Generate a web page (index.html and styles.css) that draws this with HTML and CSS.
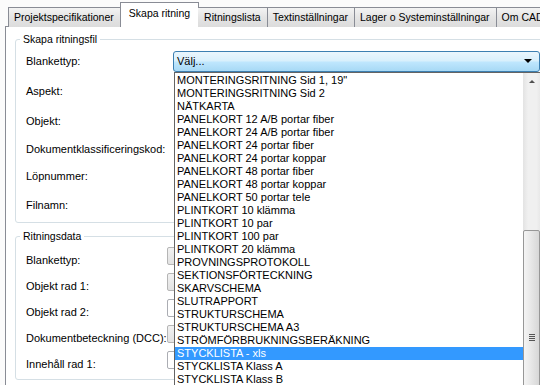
FILE: index.html
```html
<!DOCTYPE html>
<html lang="sv">
<head>
  <meta charset="UTF-8" />
  <title>Skapa ritning</title>
  <link rel="stylesheet" href="styles.css">
</head>
<body>
  <div class="window">
    <div class="tabs">
      <div class="tab">Projektspecifikationer</div>
      <div class="tab active">Skapa ritning</div>
      <div class="tab">Ritningslista</div>
      <div class="tab">Textinställningar</div>
      <div class="tab">Lager o Systeminställningar</div>
      <div class="tab">Om CADdoc</div>
    </div>

    <div class="panel">
      <fieldset class="group group-file">
        <legend>Skapa ritningsfil</legend>
        <div class="rows">
          <label>Blankettyp:</label>
          <div class="combo">
            <span class="combo-text">Välj...</span>
            <span class="combo-arrow"></span>

            <div class="dropdown">
              <ul class="options">
                <li>MONTERINGSRITNING Sid 1, 19"</li>
                <li>MONTERINGSRITNING Sid 2</li>
                <li>NÄTKARTA</li>
                <li>PANELKORT 12 A/B portar fiber</li>
                <li>PANELKORT 24 A/B portar fiber</li>
                <li>PANELKORT 24 portar fiber</li>
                <li>PANELKORT 24 portar koppar</li>
                <li>PANELKORT 48 portar fiber</li>
                <li>PANELKORT 48 portar koppar</li>
                <li>PANELKORT 50 portar tele</li>
                <li>PLINTKORT 10 klämma</li>
                <li>PLINTKORT 10 par</li>
                <li>PLINTKORT 100 par</li>
                <li>PLINTKORT 20 klämma</li>
                <li>PROVNINGSPROTOKOLL</li>
                <li>SEKTIONSFÖRTECKNING</li>
                <li>SKARVSCHEMA</li>
                <li>SLUTRAPPORT</li>
                <li>STRUKTURSCHEMA</li>
                <li>STRUKTURSCHEMA A3</li>
                <li>STRÖMFÖRBRUKNINGSBERÄKNING</li>
                <li class="selected">STYCKLISTA - xls</li>
                <li>STYCKLISTA Klass A</li>
                <li>STYCKLISTA Klass B</li>
              </ul>
              <div class="scrollbar">
                <div class="scroll-up"><span class="up-arrow"></span></div>
                <div class="thumb"><span class="grip"></span></div>
              </div>
            </div>
          </div>
          <label>Aspekt:</label><div></div>
          <label>Objekt:</label><div></div>
          <label>Dokumentklassificeringskod:</label><div></div>
          <label>Löpnummer:</label><div></div>
          <label>Filnamn:</label><div></div>
        </div>
      </fieldset>

      <fieldset class="group group-data">
        <legend>Ritningsdata</legend>
        <div class="rows">
          <label>Blankettyp:</label><div class="field gray"></div>
          <label>Objekt rad 1:</label><div class="field gray"></div>
          <label>Objekt rad 2:</label><div class="field"></div>
          <label>Dokumentbeteckning (DCC):</label><div class="field gray"></div>
          <label>Innehåll rad 1:</label><div class="field"></div>
        </div>
      </fieldset>
    </div>
  </div>
</body>
</html>
```

FILE: styles.css
```css
body {
  margin: 0;
  background: #fbfbfb;
  font-family: "Liberation Sans", Arial, sans-serif;
  color: #000;
  overflow: hidden;
}
.window {
  width: 600px;
  height: 385px;
}
.tabs {
  display: flex;
  align-items: flex-end;
  height: 27px;
  padding-left: 8px;
  margin-bottom: -1px;
  position: relative;
  z-index: 1;
}
.tab {
  height: 19px;
  line-height: 19px;
  padding: 0 6px 0 5px;
  font-size: 10.5px;
  border: 1px solid #898c95;
  border-bottom: none;
  border-right: none;
  background: linear-gradient(180deg, #f3f3f3, #e4e4e4 50%, #dcdcdc);
  white-space: nowrap;
}
.tab.active {
  height: 24px;
  line-height: 20px;
  padding: 0 8px;
  background: #fff;
  border-right: 1px solid #898c95;
  margin-right: -1px;
}
.tab.active + .tab {
  border-left: none;
  padding-left: 6px;
}
.panel {
  margin-left: 5px;
  border: 1px solid #898c95;
  background: #fff;
  padding: 5px 0 0 9px;
  height: 400px;
}
.group {
  margin: 0;
  padding: 0 0 2px 0;
  width: 570px;
  border: 1px solid #d5dfe5;
  border-radius: 3px;
}
.group legend {
  margin-left: 4px;
  padding: 0 3px;
  font-size: 10.5px;
  line-height: 14px;
}
.rows {
  display: grid;
  padding-left: 10px;
  font-size: 11px;
  align-items: center;
}
.group-file .rows {
  grid-template-columns: 147px 367px;
  grid-template-rows: 30px 30px 30px 26px 28px 30px;
}
.group-data {
  margin-top: 6px;
}
.group-data .rows {
  padding-top: 4px;
  grid-template-columns: 141px 300px;
  grid-template-rows: repeat(5, 26px);
}
.group-data label {
  position: relative;
  top: 0;
}

/* combobox (open) */
.combo {
  position: relative;
  height: 19px;
  border: 1px solid #3c7fb1;
  border-radius: 3px;
  background: linear-gradient(180deg, #eaf6fd 0%, #d9f0fc 45%, #bee6fd 55%, #a7d9f5 100%);
  display: flex;
  align-items: center;
  justify-content: space-between;
  padding: 0 7px 0 3px;
  z-index: 2;
}
.combo-text {
  font-size: 11px;
}
.combo-arrow {
  width: 0;
  height: 0;
  border-left: 4px solid transparent;
  border-right: 4px solid transparent;
  border-top: 4px solid #000;
}
.dropdown {
  position: absolute;
  top: 20px;
  left: 0;
  width: 365px;
  height: 330px;
  border: 1px solid #646464;
  background: #fff;
  display: flex;
}
.options {
  list-style: none;
  margin: 0;
  padding: 1px 0 0 0;
  flex: 1;
  overflow: hidden;
}
.options li {
  height: 13px;
  line-height: 13px;
  padding-left: 2px;
  font-size: 11px;
  white-space: nowrap;
}
.options li.selected {
  background: #3399ff;
  color: #fff;
}
.scrollbar {
  width: 17px;
  background: linear-gradient(90deg, #e3e3e3, #f0f0f0 30%, #f0f0f0 80%, #e8e8e8);
  display: flex;
  flex-direction: column;
}
.scroll-up {
  height: 17px;
  display: flex;
  align-items: center;
  justify-content: center;
}
.up-arrow {
  width: 0;
  height: 0;
  border-left: 3px solid transparent;
  border-right: 3px solid transparent;
  border-bottom: 3px solid #505050;
}
.thumb {
  margin: 140px 0 0 0;
  flex: 1;
  border: 1px solid #979797;
  border-radius: 2px;
  background: linear-gradient(90deg, #f4f4f4, #e8e8e8 45%, #d7d7d7);
  display: flex;
  justify-content: center;
}
.grip {
  margin-top: 103px;
  width: 6px;
  height: 7px;
  background: repeating-linear-gradient(180deg, #555 0 1px, transparent 1px 2px);
}

/* fields hidden behind the open list */
.field {
  align-self: start;
  height: 16px;
  border: 1px solid #abadb3;
  border-radius: 2px;
  background: #fff;
}
.field.gray {
  border-color: #b5b5b5;
  background: linear-gradient(180deg, #f2f2f2, #e2e2e2);
}
```
